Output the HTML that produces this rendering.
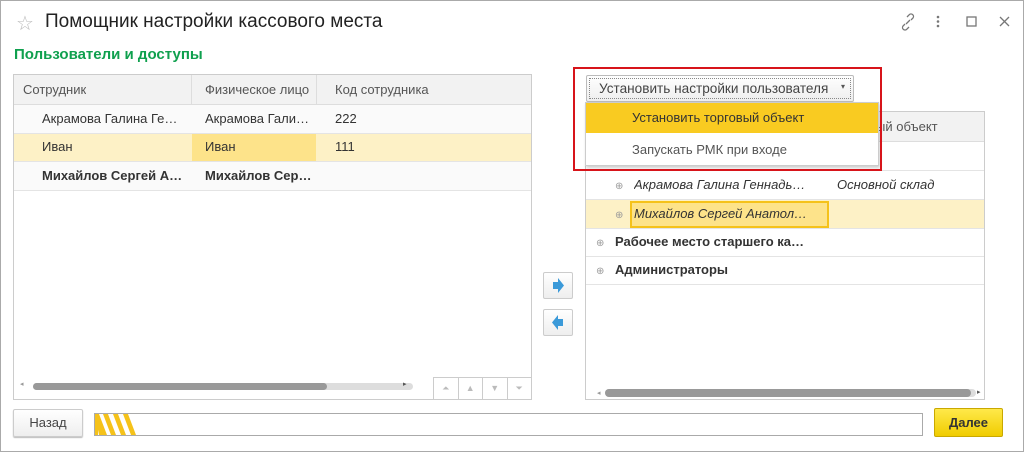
<!DOCTYPE html><html><head><meta charset="utf-8"><style>
*{box-sizing:border-box;margin:0;padding:0}
body{width:1024px;height:452px;background:#fff;font-family:"Liberation Sans",sans-serif;font-size:13px;color:#333;position:relative;overflow:hidden}
.a{position:absolute}
.frame{left:0;top:0;width:1024px;height:452px;border:1px solid #aaa}
.cell{position:absolute;height:28px;line-height:28px;white-space:nowrap;overflow:hidden}
.hl{border-bottom:1px solid #e4e4e4}
.pl{color:#999;font-size:10px;margin-top:2px}
</style></head><body>
<div class="a frame"></div>
<div class="a" style="left:16px;top:11px;font-size:20px;color:#bbb">☆</div>
<div class="a" style="left:45px;top:11px;font-size:19px;color:#222">Помощник настройки кассового места</div>
<svg class="a" style="left:898px;top:12px" width="120" height="20">
<g fill="none" stroke="#777" stroke-width="1.3"><path d="M7 12l-2 2a2.5 2.5 0 0 0 4 3l2-2M13 8l2-2a2.5 2.5 0 0 0-4-3l-2 2M8 12l4-4"/>
<rect x="69" y="5" width="9" height="9"/><path d="M102 5l9 9M111 5l-9 9"/></g>
<g fill="#777"><circle cx="40" cy="5" r="1.3"/><circle cx="40" cy="9.5" r="1.3"/><circle cx="40" cy="14" r="1.3"/></g></svg>
<div class="a" style="left:14px;top:46px;font-size:15px;font-weight:bold;color:#0fa04e">Пользователи и доступы</div>

<div class="a" style="left:13px;top:74px;width:519px;height:326px;border:1px solid #ccc">
<div class="a" style="left:0;top:0;width:517px;height:30px;background:#f2f2f2;border-bottom:1px solid #ddd"></div>
<div class="a" style="left:177px;top:0;width:1px;height:30px;background:#ddd"></div>
<div class="a" style="left:302px;top:0;width:1px;height:30px;background:#ddd"></div>
<div class="cell" style="left:9px;top:1px;color:#555">Сотрудник</div>
<div class="cell" style="left:191px;top:1px;color:#555">Физическое лицо</div>
<div class="cell" style="left:321px;top:1px;color:#555">Код сотрудника</div>
<div class="a hl" style="left:0;top:30px;width:517px;height:29px;background:#fafafa"></div>
<div class="a hl" style="left:0;top:59px;width:517px;height:28px;background:#fdf1c6"></div>
<div class="a" style="left:178px;top:59px;width:124px;height:27px;background:#fde38a"></div>
<div class="a hl" style="left:0;top:87px;width:517px;height:29px;background:#fafafa"></div>
<div class="cell" style="left:28px;top:30px;width:146px">Акрамова Галина Ге…</div>
<div class="cell" style="left:191px;top:30px;width:108px">Акрамова Гали…</div>
<div class="cell" style="left:321px;top:30px">222</div>
<div class="cell" style="left:28px;top:58px">Иван</div>
<div class="cell" style="left:191px;top:58px">Иван</div>
<div class="cell" style="left:321px;top:58px">111</div>
<div class="cell" style="left:28px;top:87px;font-weight:bold">Михайлов Сергей А…</div>
<div class="cell" style="left:191px;top:87px;font-weight:bold">Михайлов Сер…</div>
<div class="a" style="left:6px;top:305px;font-size:7px;color:#999">◂</div>
<div class="a" style="left:19px;top:308px;width:380px;height:7px;border-radius:4px;background:#ddd"></div>
<div class="a" style="left:19px;top:308px;width:294px;height:7px;border-radius:4px;background:#999"></div>
<div class="a" style="left:389px;top:305px;font-size:7px;color:#555">▸</div>
<div class="a" style="left:419px;top:302px;width:98px;height:22px;border-top:1px solid #ccc;border-left:1px solid #ccc;display:flex">
<div style="flex:1;border-right:1px solid #ccc;text-align:center;line-height:20px;font-size:9px;color:#bbb">⏶</div>
<div style="flex:1;border-right:1px solid #ccc;text-align:center;line-height:20px;font-size:9px;color:#bbb">▲</div>
<div style="flex:1;border-right:1px solid #ccc;text-align:center;line-height:20px;font-size:9px;color:#bbb">▼</div>
<div style="flex:1;text-align:center;line-height:20px;font-size:9px;color:#bbb">⏷</div></div>
</div>

<div class="a" style="left:543px;top:272px;width:30px;height:27px;border:1px solid #ccc;border-radius:2px;background:linear-gradient(#fff,#eee)"><svg width="28" height="25"><path d="M9 9h5v-4l6 7.5-6 7.5v-4h-5z" fill="#3b9ad9"/></svg></div>
<div class="a" style="left:543px;top:309px;width:30px;height:27px;border:1px solid #ccc;border-radius:2px;background:linear-gradient(#fff,#eee)"><svg width="28" height="25"><path d="M19 9h-5v-4l-6 7.5 6 7.5v-4h5z" fill="#3b9ad9"/></svg></div>

<div class="a" style="left:585px;top:111px;width:400px;height:289px;border:1px solid #ccc">
<div class="a" style="left:0;top:0;width:398px;height:30px;background:#f2f2f2;border-bottom:1px solid #ddd"></div>
<div class="cell" style="left:290px;top:1px;color:#555">ый объект</div>
<div class="a hl" style="left:0;top:30px;width:398px;height:29px"></div>
<div class="a hl" style="left:0;top:59px;width:398px;height:29px"></div>
<div class="a hl" style="left:0;top:88px;width:398px;height:29px;background:#fdf1c6"></div>
<div class="a" style="left:44px;top:89px;width:199px;height:27px;background:#fde38a;border:2px solid #f5c21a"></div>
<div class="a hl" style="left:0;top:117px;width:398px;height:28px"></div>
<div class="a hl" style="left:0;top:145px;width:398px;height:28px"></div>
<div class="cell pl" style="left:29px;top:59px">⊕</div>
<div class="cell" style="left:48px;top:59px;font-style:italic">Акрамова Галина Геннадь…</div>
<div class="cell" style="left:251px;top:59px;font-style:italic">Основной склад</div>
<div class="cell pl" style="left:29px;top:88px">⊕</div>
<div class="cell" style="left:48px;top:88px;font-style:italic">Михайлов Сергей Анатол…</div>
<div class="cell pl" style="left:10px;top:116px">⊕</div>
<div class="cell" style="left:29px;top:116px;font-weight:bold">Рабочее место старшего ка…</div>
<div class="cell pl" style="left:10px;top:144px">⊕</div>
<div class="cell" style="left:29px;top:144px;font-weight:bold">Администраторы</div>
<div class="a" style="left:11px;top:277px;font-size:7px;color:#999">◂</div>
<div class="a" style="left:19px;top:277px;width:371px;height:8px;border-radius:4px;background:#ddd"></div>
<div class="a" style="left:19px;top:277px;width:366px;height:8px;border-radius:4px;background:#999"></div>
<div class="a" style="left:391px;top:276px;font-size:7px;color:#555">▸</div>
</div>

<div class="a" style="left:586px;top:75px;width:268px;height:27px;border:1px solid #bbb;border-radius:2px;background:linear-gradient(#fff,#eee)"><div class="a" style="left:2px;top:2px;right:2px;bottom:2px;border:1px dotted #888"></div><div class="a" style="left:12px;top:5px;font-size:13.6px;color:#444">Установить настройки пользователя</div><div class="a" style="left:254px;top:6px;font-size:8px;color:#555">▾</div></div>
<div class="a" style="left:585px;top:102px;width:294px;height:64px;border:1px solid #ccc;background:#fff;box-shadow:1px 2px 3px rgba(0,0,0,.2)">
<div class="a" style="left:0;top:0;width:292px;height:30px;background:#f9cb21"></div>
<div class="a" style="left:46px;top:7px;font-size:13px;color:#333">Установить торговый объект</div>
<div class="a" style="left:46px;top:39px;font-size:13px;color:#555">Запускать РМК при входе</div></div>
<div class="a" style="left:573px;top:67px;width:309px;height:104px;border:2px solid #d7141a"></div>

<div class="a" style="left:13px;top:409px;width:70px;height:28px;border:1px solid #ccc;border-radius:2px;background:linear-gradient(#fff,#eee);box-shadow:0 1px 1px #bbb;text-align:center;line-height:26px;color:#444">Назад</div>
<div class="a" style="left:94px;top:413px;width:829px;height:23px;border:1px solid #aaa;overflow:hidden"><svg width="60" height="21"><path d="M0 0h4l8 21H4zM8 0h5l8 21h-5zM18 0h5l8 21h-5zM28 0h5l8 21h-5z" fill="#f5c21a"/><path d="M0 0h3v21H0z" fill="#f5c21a"/></svg></div>
<div class="a" style="left:934px;top:408px;width:69px;height:29px;border:1px solid #c9a800;border-radius:2px;background:linear-gradient(#ffe94a,#f0cc00);text-align:center;line-height:27px;font-weight:bold;color:#333">Далее</div>
</body></html>
